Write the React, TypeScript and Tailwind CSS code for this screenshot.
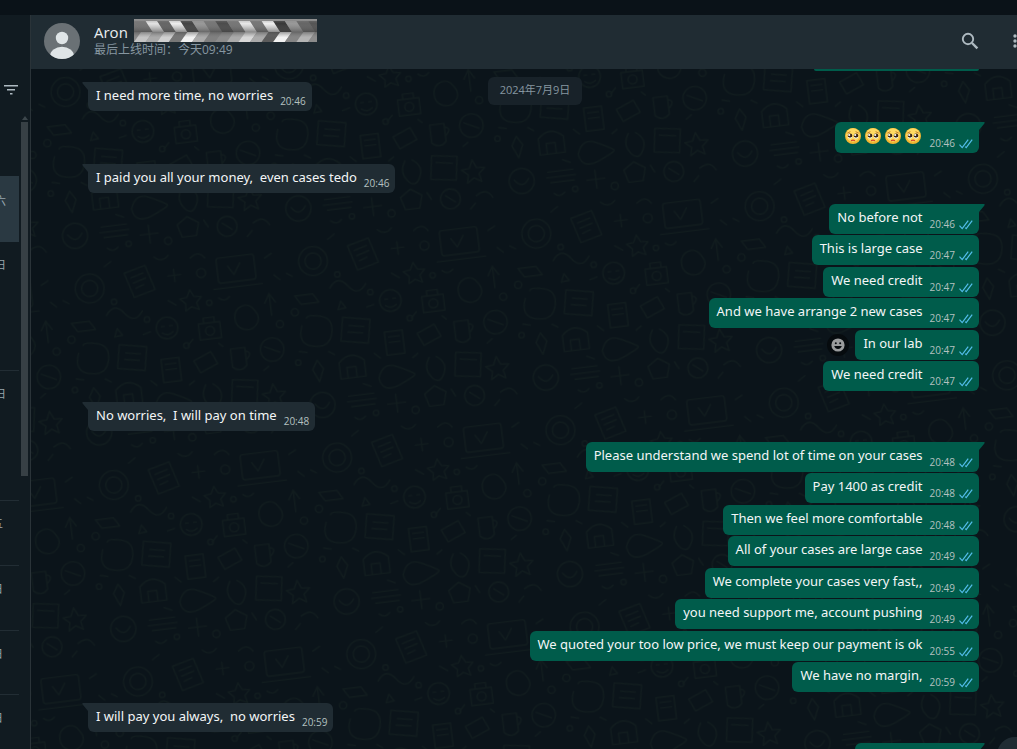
import React from 'react';

interface Message {
  text?: string;
  time: string;
  emoji?: number;
  reaction?: boolean;
}

interface Group {
  from: 'me' | 'them';
  messages: Message[];
}

const groups: Group[] = [
  { from: 'them', messages: [{ text: 'I need more time, no worries', time: '20:46' }] },
  { from: 'me', messages: [{ emoji: 4, time: '20:46' }] },
  { from: 'them', messages: [{ text: 'I paid you all your money,  even cases tedo', time: '20:46' }] },
  {
    from: 'me',
    messages: [
      { text: 'No before not', time: '20:46' },
      { text: 'This is large case', time: '20:47' },
      { text: 'We need credit', time: '20:47' },
      { text: 'And we have arrange 2 new cases', time: '20:47' },
      { text: 'In our lab', time: '20:47', reaction: true },
      { text: 'We need credit', time: '20:47' },
    ],
  },
  { from: 'them', messages: [{ text: 'No worries,  I will pay on time', time: '20:48' }] },
  {
    from: 'me',
    messages: [
      { text: 'Please understand we spend lot of time on your cases', time: '20:48' },
      { text: 'Pay 1400 as credit', time: '20:48' },
      { text: 'Then we feel more comfortable', time: '20:48' },
      { text: 'All of your cases are large case', time: '20:49' },
      { text: 'We complete your cases very fast,,', time: '20:49' },
      { text: 'you need support me, account pushing', time: '20:49' },
      { text: 'We quoted your too low price, we must keep our payment is ok', time: '20:55' },
      { text: 'We have no margin,', time: '20:59' },
    ],
  },
  { from: 'them', messages: [{ text: 'I will pay you always,  no worries', time: '20:59' }] },
];

const Checks = () => (
  <svg width="14" height="11" viewBox="0 0 14 11" fill="none" stroke="#53bdeb" strokeWidth="1.2" aria-label="Read">
    <path d="M0.5 6.6 3.2 9.6 9.2 1.6M6.2 8.6l1 1L13.2 1.6" />
  </svg>
);

const TearyFace = () => (
  <svg width="16" height="16" viewBox="0 0 16 16">
    <circle cx="8" cy="8" r="8" fill="#f2b632" />
    <circle cx="8" cy="7" r="6.8" fill="#ffda62" />
    <path d="M2.2 5.2 5.4 3.6M13.8 5.2 10.6 3.6" stroke="#b5651d" strokeWidth="0.8" />
    <circle cx="5" cy="7.8" r="2.3" fill="#3b2415" />
    <circle cx="11" cy="7.8" r="2.3" fill="#3b2415" />
    <circle cx="4.2" cy="7" r="1.1" fill="#fff" />
    <circle cx="10.2" cy="7" r="1.1" fill="#fff" />
    <path d="M3 9.4q2 1.6 4 0M9 9.4q2 1.6 4 0" stroke="#e6eef0" strokeWidth="1" fill="none" />
    <path d="M6 12.8q2-1.4 4 0" stroke="#d2452d" strokeWidth="1.4" fill="none" />
  </svg>
);

const Tail = ({ mine }: { mine: boolean }) =>
  mine ? (
    <svg className="absolute top-0 -right-1.5" width="7" height="10" viewBox="0 0 7 10">
      <path d="M0 0H6Q7.4 0.4 6 2L1 8V10H0Z" fill="#005c4b" />
    </svg>
  ) : (
    <svg className="absolute top-0 -left-1.5" width="7" height="10" viewBox="0 0 7 10">
      <path d="M7 0H1Q-0.4 0.4 1 2L6 8V10H7Z" fill="#202c33" />
    </svg>
  );

// Faint doodles behind the conversation
const Wallpaper = () => (
  <svg className="absolute inset-0 h-full w-full" aria-hidden="true">
    <defs>
      <pattern id="doodles" width="250" height="220" patternUnits="userSpaceOnUse" patternTransform="rotate(-7) scale(0.9)">
        <g fill="none" stroke="#111c1e" strokeWidth="1.5" strokeLinecap="round" strokeLinejoin="round">
          <circle cx="35" cy="30" r="16" />
          <circle cx="35" cy="30" r="9" />
          <path d="M75 18l24-6 8 28-24 6zM82 24l14-4M84 30l14-4M86 36l9-3" />
          <path d="M130 20v14M123 27h14M145 45l4 8 8 1-6 6 2 8-8-4-7 4 1-8-6-6 8-1z" />
          <rect x="178" y="14" width="42" height="28" rx="3" />
          <path d="M172 48h54M190 24l6 10 8-12M10 66h20l6 10H16zM50 62q10-14 20 0t20 0" />
          <circle cx="115" cy="84" r="12" />
          <path d="M109 82l3 0M118 82l3 0M109 89q6 5 12 0M150 84h24v18h-24zM156 84v-6h12v6" />
          <circle cx="162" cy="93" r="5" />
          <path d="M200 70c-12 4-12 22 0 26s20-8 16-16-8-12-16-10zM232 60v24M226 70l6-10 6 10" />
          <path d="M14 100q-8 20 10 24t22-12-10-20-16 0M60 96l30 6-5 26-30-6zM66 106l16 3M64 113l16 3" />
          <path d="M104 118h20v26h-20zM108 124h12M108 130h12M140 124l20-8 6 14-20 8zM182 116v20q8 8 16 0v-20zM198 120q9 2 0 10" />
          <circle cx="228" cy="122" r="13" />
          <path d="M220 118l16 8M20 150l6-10 6 10-6 14zM50 146q14-14 28 0v18H50zM58 164v-12h10v12" />
          <path d="M92 168q6-18 22-10t18 10-18 10-22-10zM150 152q-8 12 0 22t14-2-6-20M180 150l28 4-4 26-28-4zM184 158l18 3" />
          <circle cx="26" cy="190" r="14" />
          <path d="M18 188q8 12 16 0M56 184h28M54 190h32M58 196h26M108 188v20M98 198h20M140 192l12-8 12 8-4 14h-16z" />
          <circle cx="195" cy="200" r="11" />
          <path d="M190 196l10 8M224 160l4 9 9 1-7 6 2 9-8-5-8 5 2-9-7-6 9-1zM224 200q12-8 18 4" />
          <path d="M54 8l8-5M60 78l5 8-9 1zM110 4q8 8 16 0M150 10q10-8 16 2M128 60l-8-6M176 58q6 6 12 0M88 88l8-2M136 106l6-6M170 108l4 4M8 128l8 2M40 132l6 4M90 140l6 6M132 150l6-4M216 144l6-4M240 40l6 6M232 20l8-4M4 40l6 4M74 172l8 4M170 190l4 8M216 214l6-6M60 208q6 6 12 0" />
          <circle cx="60" cy="48" r="3" />
          <circle cx="165" cy="62" r="3" />
          <circle cx="94" cy="72" r="3" />
          <circle cx="134" cy="106" r="3" />
          <circle cx="5" cy="140" r="3" />
          <circle cx="84" cy="206" r="3" />
          <circle cx="160" cy="28" r="5" />
          <circle cx="240" cy="95" r="4" />
          <circle cx="8" cy="84" r="4" />
          <circle cx="128" cy="208" r="4" />
        </g>
      </pattern>
    </defs>
    <rect width="100%" height="100%" fill="url(#doodles)" />
  </svg>
);

const shadesTop = ['#777', '#777', '#e2e2e2', '#666', '#eee', '#444', '#999', '#777', '#4c4c4c', '#777', '#e8e8e8', '#777', '#eee', '#383838', '#999', '#666', '#555'];
const shadesBottom = ['#c4c4c4', '#aaa', '#d0d0d0', '#777', '#f2f2f2', '#aaa', '#808080', '#8c8c8c', '#aaa', '#d8d8d8', '#aaa', '#5c5c5c', '#f2f2f2', '#858585', '#b4b4b4', '#8c8c8c'];

// Chevron strip that covers the surname
const Mosaic = () => (
  <svg width="183" height="23" viewBox="0 0 183 23" className="shrink-0" aria-hidden="true">
    <defs>
      <linearGradient id="fade" x1="0" y1="0" x2="0" y2="1">
        <stop offset="0" stopColor="#999" stopOpacity="0.5" />
        <stop offset="0.2" stopColor="#777" stopOpacity="0" />
        <stop offset="0.55" stopColor="#444" stopOpacity="0.55" />
        <stop offset="0.8" stopColor="#777" stopOpacity="0" />
      </linearGradient>
    </defs>
    <rect width="183" height="23" fill="#8a8a8a" />
    {shadesTop.map((c, i) => (
      <path key={i} d={`M${(i - 1) * 11.6} 2h11.7l7 11h-11.7z`} fill={c} />
    ))}
    {shadesBottom.map((c, i) => (
      <path key={i} d={`M${i * 11.6 + 7} 13h11.7l-7 10h-11.7z`} fill={c} />
    ))}
    <rect width="183" height="23" fill="url(#fade)" />
  </svg>
);

const Bubble = ({ message, mine, first }: { message: Message; mine: boolean; first: boolean }) => (
  <div className={`flex items-center not-first:even:mt-px not-first:odd:mt-0.5 ${mine ? 'justify-end' : 'justify-start'}`}>
    {message.reaction && (
      <button aria-label="React" className="mr-1.5 flex h-[22px] w-[22px] items-center justify-center rounded-full bg-[#060b0e]">
        <svg width="14" height="14" viewBox="0 0 14 14">
          <circle cx="7" cy="7" r="6.6" fill="#9a9c9d" />
          <circle cx="4.8" cy="5.2" r="1" fill="#060b0e" />
          <circle cx="9.2" cy="5.2" r="1" fill="#060b0e" />
          <path d="M3.2 8h7.6Q9.8 11 7 11T3.2 8Z" fill="#060b0e" />
        </svg>
      </button>
    )}
    <div
      className={`relative flex rounded-md pr-1.5 pl-2 ${mine ? 'bg-[#005c4b]' : 'bg-[#202c33]'} ${
        first ? (mine ? 'rounded-tr-none' : 'rounded-tl-none') : ''
      }`}
    >
      {first && <Tail mine={mine} />}
      {message.emoji ? (
        <span className="flex h-[31px] gap-1 px-0.5 pt-1.5" role="img" aria-label="Face holding back tears">
          {Array.from({ length: message.emoji }, (_, i) => (
            <TearyFace key={i} />
          ))}
        </span>
      ) : (
        <span
          className={`font-['Noto_Sans','Noto_Sans_CJK_SC',sans-serif] text-[13px] leading-[27px] whitespace-pre text-[#f3f6f7] ${
            mine ? 'pb-[3px]' : 'pb-0.5'
          }`}
        >
          {message.text}
        </span>
      )}
      <span className="ml-[7px] flex items-center gap-1 self-end pb-[3px] text-[10px] leading-[14px] text-[#b4c1c0]">
        {message.time}
        {mine && <Checks />}
      </span>
    </div>
  </div>
);

const Sidebar = () => (
  <aside className="flex w-[31px] shrink-0 overflow-hidden border-r border-[#2a3338] bg-[#111b21]">
    <div className="flex w-[19px] flex-col text-[11px] text-[#98a6ae]">
      <button aria-label="Filter" className="mt-[69px] flex justify-end">
        <svg width="16" height="12" viewBox="0 0 16 12" stroke="#aebac1" strokeWidth="1.4">
          <path d="M1 1.7h14M4 5.7h8M7 9.7h2.5" />
        </svg>
      </button>
      <ul className="mt-20 flex flex-col">
        <li className="flex h-[66px] bg-[#2a3942] pt-[17px]"><span className="-ml-[5px]">六</span></li>
        <li className="flex h-[129px] border-b border-[#222d34] pt-[15px]"><span className="-ml-[5px]">日</span></li>
        <li className="flex h-[130px] border-b border-[#222d34] pt-[15px]"><span className="-ml-[5px]">日</span></li>
        <li className="flex h-[65px] border-b border-[#222d34] pt-[15px]"><span className="-ml-2">五</span></li>
        <li className="flex h-[65px] border-b border-[#222d34] pt-[15px]"><span className="-ml-2">日</span></li>
        <li className="flex h-[64px] border-b border-[#222d34] pt-[15px]"><span className="-ml-2">日</span></li>
        <li className="flex pt-[15px]"><span className="-ml-2">日</span></li>
      </ul>
    </div>
    <div className="ml-0.5 flex w-[7px] flex-col items-center pt-[101px]">
      <svg width="6" height="4" viewBox="0 0 6 4">
        <path d="M3 0 6 4H0Z" fill="#3c464b" />
      </svg>
      <div className="mt-0.5 h-[354px] w-full bg-[#374045]" />
    </div>
  </aside>
);

const Header = () => (
  <header className="relative z-10 flex h-[54px] shrink-0 items-center bg-[#202c33] pb-0.5 pl-[13px]">
    <svg width="36" height="36" viewBox="0 0 36 36" className="shrink-0">
      <defs>
        <clipPath id="avatar">
          <circle cx="18" cy="18" r="18" />
        </clipPath>
      </defs>
      <g clipPath="url(#avatar)">
        <rect width="36" height="36" fill="#6a7175" />
        <circle cx="18" cy="15" r="6.2" fill="#dfe5e7" />
        <ellipse cx="18" cy="33" rx="12" ry="9.2" fill="#dfe5e7" />
      </g>
    </svg>
    <div className="ml-3.5 flex flex-col pb-1.5">
      <div className="flex h-6 items-center gap-1.5">
        <h1 className="pt-1 text-[15px] font-medium text-[#e9edef]">Aron</h1>
        <Mosaic />
      </div>
      <p className="text-[12px] leading-4 text-[#8696a0]">最后上线时间：今天09:49</p>
    </div>
    <div className="ml-auto flex items-center">
      <button aria-label="Search">
        <svg width="20" height="20" viewBox="0 0 20 20" fill="none" stroke="#aebac1">
          <circle cx="8" cy="8" r="5.2" strokeWidth="1.9" />
          <path d="M12 12l5.4 5.4" strokeWidth="2.4" />
        </svg>
      </button>
      <button aria-label="Menu" className="ml-8 w-[5px] overflow-hidden">
        <svg width="5" height="16" viewBox="0 0 5 16" fill="#aebac1">
          <circle cx="3" cy="3" r="1.7" />
          <circle cx="3" cy="8" r="1.7" />
          <circle cx="3" cy="13" r="1.7" />
        </svg>
      </button>
    </div>
  </header>
);

export default function App() {
  return (
    <div className="flex h-screen flex-col overflow-hidden bg-[#0a1218] pt-[15px] font-['Open_Sans','Noto_Sans_CJK_SC',sans-serif]">
      <div className="flex min-h-0 flex-1">
        <Sidebar />
        <div className="flex min-w-0 flex-1 flex-col">
          <Header />
          <main className="relative min-h-0 flex-1 overflow-hidden bg-[#0b141a]">
            <Wallpaper />
            <div className="absolute inset-x-0 top-2 flex justify-center pl-[22px]">
              <span className="rounded-md bg-[#182229] px-3 pt-[5px] pb-[7px] text-[11px] leading-4 text-[#8696a0]">2024年7月9日</span>
            </div>
            <div className="relative flex flex-col gap-[11px] pr-[38px] pl-[57px]">
              <div className="ml-auto h-0.5 w-[165px] rounded-b-md bg-[#005c4b]" />
              {groups.map((group, g) => (
                <div key={g} className="flex flex-col">
                  {group.messages.map((message, i) => (
                    <Bubble key={i} message={message} mine={group.from === 'me'} first={i === 0} />
                  ))}
                </div>
              ))}
              <div className="relative ml-auto h-10 w-[124px] rounded-l-md bg-[#005c4b]">
                <Tail mine />
              </div>
            </div>
            <button aria-label="Scroll to bottom" className="absolute -right-4 -bottom-6 h-9 w-9 rounded-full bg-[#202c33]" />
          </main>
        </div>
      </div>
    </div>
  );
}
